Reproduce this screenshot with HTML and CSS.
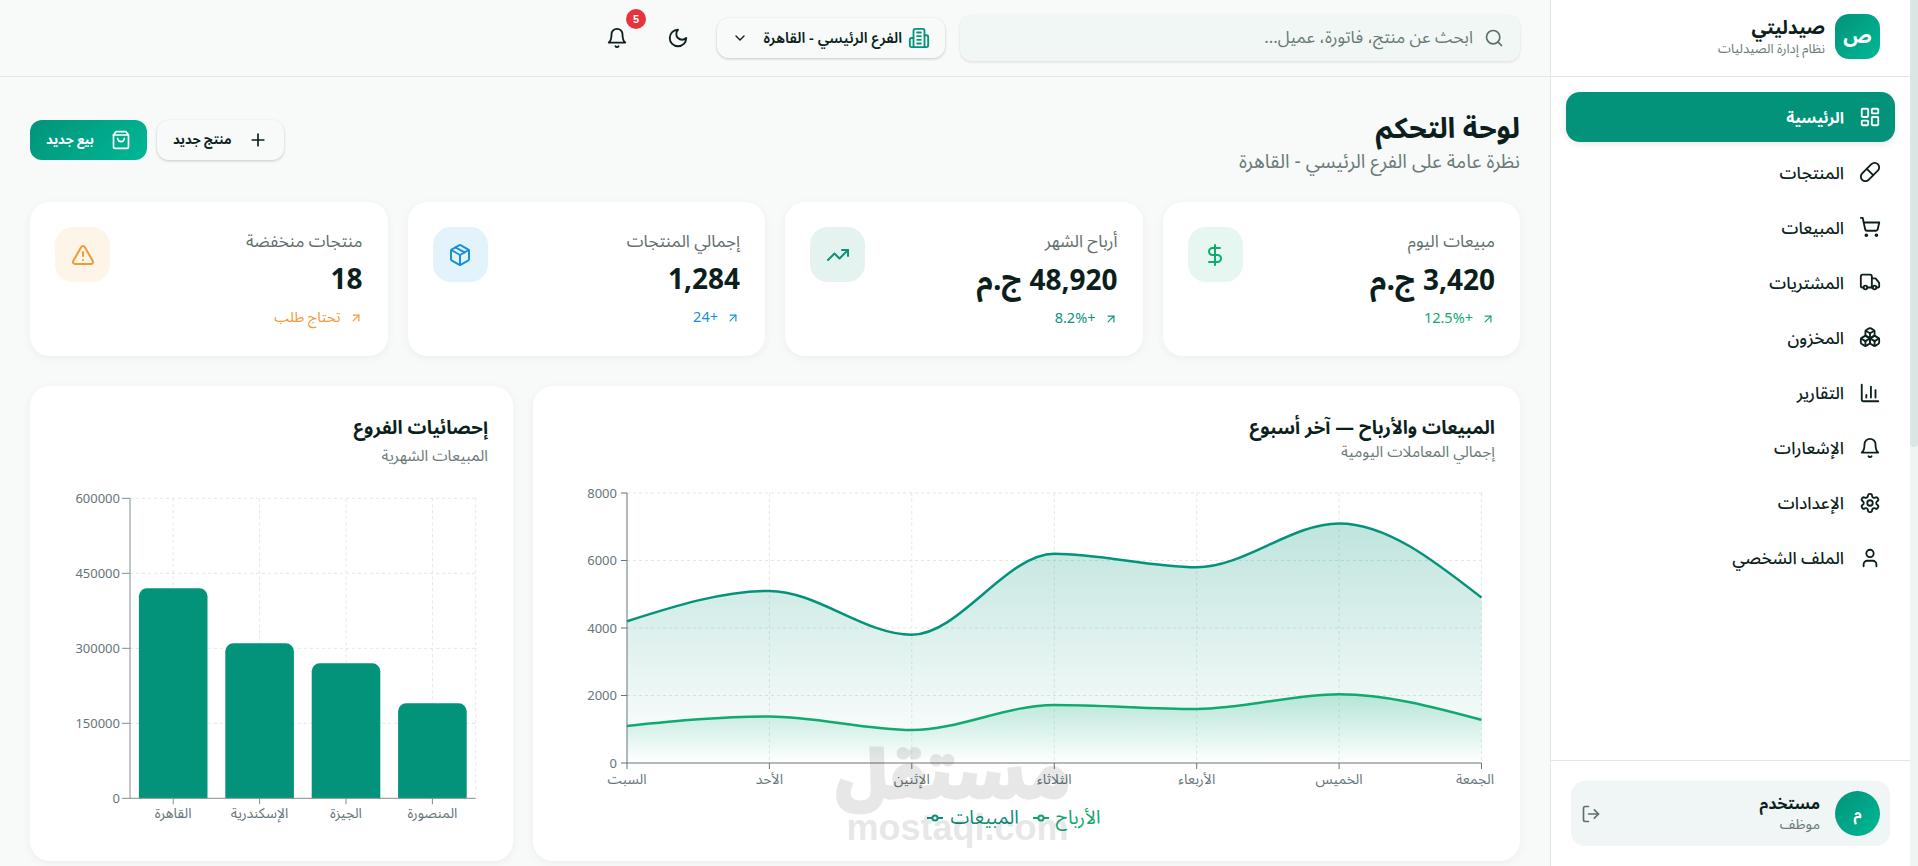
FILE: index.html
```html
<!DOCTYPE html>
<html lang="ar" dir="rtl">
<head>
  <meta charset="UTF-8" />
  <meta name="viewport" content="width=device-width, initial-scale=1.0"/>
  <title>صيدليتي - لوحة التحكم</title>
  <link rel="stylesheet" href="styles.css">
</head>
<body>
  <svg class="sprite" aria-hidden="true">
    <symbol id="i-dashboard" viewBox="0 0 24 24"><rect width="7" height="9" x="3" y="3" rx="1"/><rect width="7" height="5" x="14" y="3" rx="1"/><rect width="7" height="9" x="14" y="12" rx="1"/><rect width="7" height="5" x="3" y="16" rx="1"/></symbol>
    <symbol id="i-pill" viewBox="0 0 24 24"><path d="m10.5 20.5 10-10a4.95 4.95 0 1 0-7-7l-10 10a4.95 4.95 0 1 0 7 7Z"/><path d="m8.5 8.5 7 7"/></symbol>
    <symbol id="i-cart" viewBox="0 0 24 24"><circle cx="8" cy="21" r="1"/><circle cx="19" cy="21" r="1"/><path d="M2.05 2.05h2l2.66 12.42a2 2 0 0 0 2 1.58h9.78a2 2 0 0 0 1.95-1.57l1.65-7.43H5.12"/></symbol>
    <symbol id="i-truck" viewBox="0 0 24 24"><path d="M14 18V6a2 2 0 0 0-2-2H4a2 2 0 0 0-2 2v11a1 1 0 0 0 1 1h2"/><path d="M15 18H9"/><path d="M19 18h2a1 1 0 0 0 1-1v-3.65a1 1 0 0 0-.22-.624l-3.48-4.35A1 1 0 0 0 17.52 8H14"/><circle cx="17" cy="18" r="2"/><circle cx="7" cy="18" r="2"/></symbol>
    <symbol id="i-boxes" viewBox="0 0 24 24"><path d="M2.97 12.92A2 2 0 0 0 2 14.63v3.24a2 2 0 0 0 .97 1.71l3 1.8a2 2 0 0 0 2.06 0L12 19v-5.5l-5-3-4.03 2.42Z"/><path d="m7 16.5-4.74-2.85"/><path d="m7 16.5 5-3"/><path d="M7 16.5v5.17"/><path d="M12 13.5V19l3.97 2.38a2 2 0 0 0 2.06 0l3-1.8a2 2 0 0 0 .97-1.71v-3.24a2 2 0 0 0-.97-1.71L17 10.5l-5 3Z"/><path d="m17 16.5-5-3"/><path d="m17 16.5 4.74-2.85"/><path d="M17 16.5v5.17"/><path d="M7.97 4.42A2 2 0 0 0 7 6.13v4.37l5 3 5-3V6.13a2 2 0 0 0-.97-1.71l-3-1.8a2 2 0 0 0-2.06 0l-3 1.8Z"/><path d="M12 8 7.26 5.15"/><path d="m12 8 4.74-2.85"/><path d="M12 13.5V8"/></symbol>
    <symbol id="i-chart" viewBox="0 0 24 24"><path d="M3 3v16a2 2 0 0 0 2 2h16"/><path d="M18 17V9"/><path d="M13 17V5"/><path d="M8 17v-3"/></symbol>
    <symbol id="i-bell" viewBox="0 0 24 24"><path d="M6 8a6 6 0 0 1 12 0c0 7 3 9 3 9H3s3-2 3-9"/><path d="M10.3 21a1.94 1.94 0 0 0 3.4 0"/></symbol>
    <symbol id="i-settings" viewBox="0 0 24 24"><path d="M12.22 2h-.44a2 2 0 0 0-2 2v.18a2 2 0 0 1-1 1.73l-.43.25a2 2 0 0 1-2 0l-.15-.08a2 2 0 0 0-2.73.73l-.22.38a2 2 0 0 0 .73 2.73l.15.1a2 2 0 0 1 1 1.72v.51a2 2 0 0 1-1 1.74l-.15.09a2 2 0 0 0-.73 2.73l.22.38a2 2 0 0 0 2.73.73l.15-.08a2 2 0 0 1 2 0l.43.25a2 2 0 0 1 1 1.73V20a2 2 0 0 0 2 2h.44a2 2 0 0 0 2-2v-.18a2 2 0 0 1 1-1.73l.43-.25a2 2 0 0 1 2 0l.15.08a2 2 0 0 0 2.73-.73l.22-.39a2 2 0 0 0-.73-2.73l-.15-.08a2 2 0 0 1-1-1.74v-.5a2 2 0 0 1 1-1.74l.15-.09a2 2 0 0 0 .73-2.73l-.22-.38a2 2 0 0 0-2.73-.73l-.15.08a2 2 0 0 1-2 0l-.43-.25a2 2 0 0 1-1-1.73V4a2 2 0 0 0-2-2z"/><circle cx="12" cy="12" r="3"/></symbol>
    <symbol id="i-user" viewBox="0 0 24 24"><path d="M19 21v-2a4 4 0 0 0-4-4H9a4 4 0 0 0-4 4v2"/><circle cx="12" cy="7" r="4"/></symbol>
    <symbol id="i-logout" viewBox="0 0 24 24"><path d="M9 21H5a2 2 0 0 1-2-2V5a2 2 0 0 1 2-2h4"/><path d="m16 17 5-5-5-5"/><path d="M21 12H9"/></symbol>
    <symbol id="i-search" viewBox="0 0 24 24"><circle cx="11" cy="11" r="8"/><path d="m21 21-4.3-4.3"/></symbol>
    <symbol id="i-building" viewBox="0 0 24 24"><path d="M6 22V4a2 2 0 0 1 2-2h8a2 2 0 0 1 2 2v18Z"/><path d="M6 12H4a2 2 0 0 0-2 2v6a2 2 0 0 0 2 2h2"/><path d="M18 9h2a2 2 0 0 1 2 2v9a2 2 0 0 1-2 2h-2"/><path d="M10 6h4"/><path d="M10 10h4"/><path d="M10 14h4"/><path d="M10 18h4"/></symbol>
    <symbol id="i-chevron" viewBox="0 0 24 24"><path d="m6 9 6 6 6-6"/></symbol>
    <symbol id="i-moon" viewBox="0 0 24 24"><path d="M12 3a6 6 0 0 0 9 9 9 9 0 1 1-9-9Z"/></symbol>
    <symbol id="i-bag" viewBox="0 0 24 24"><path d="M6 2 3 6v14a2 2 0 0 0 2 2h14a2 2 0 0 0 2-2V6l-3-4Z"/><path d="M3 6h18"/><path d="M16 10a4 4 0 0 1-8 0"/></symbol>
    <symbol id="i-plus" viewBox="0 0 24 24"><path d="M5 12h14"/><path d="M12 5v14"/></symbol>
    <symbol id="i-dollar" viewBox="0 0 24 24"><path d="M12 2v20"/><path d="M17 5H9.5a3.5 3.5 0 0 0 0 7h5a3.5 3.5 0 0 1 0 7H6"/></symbol>
    <symbol id="i-trend" viewBox="0 0 24 24"><path d="M22 7 13.5 15.5 8.5 10.5 2 17"/><path d="M16 7h6v6"/></symbol>
    <symbol id="i-package" viewBox="0 0 24 24"><path d="M11 21.73a2 2 0 0 0 2 0l7-4A2 2 0 0 0 21 16V8a2 2 0 0 0-1-1.73l-7-4a2 2 0 0 0-2 0l-7 4A2 2 0 0 0 3 8v8a2 2 0 0 0 1 1.73z"/><path d="M12 22V12"/><path d="M3.29 7 12 12l8.71-5"/><path d="m7.5 4.27 9 5.15"/></symbol>
    <symbol id="i-alert" viewBox="0 0 24 24"><path d="m21.73 18-8-14a2 2 0 0 0-3.48 0l-8 14A2 2 0 0 0 4 21h16a2 2 0 0 0 1.73-3"/><path d="M12 9v4"/><path d="M12 17h.01"/></symbol>
    <symbol id="i-arrow" viewBox="0 0 24 24"><path d="M7 7h10v10"/><path d="M7 17 17 7"/></symbol>
  </svg>

  <div class="app">
    <div class="scrollbar"><div class="scrollbar-thumb"></div></div>

    <!-- القائمة الجانبية -->
    <aside class="sidebar">
      <div class="brand">
        <div class="avatar logo">ص</div>
        <div>
          <div class="brand-name">صيدليتي</div>
          <div class="brand-sub">نظام إدارة الصيدليات</div>
        </div>
      </div>
      <nav class="nav">
        <a class="nav-item active"><svg class="icon"><use href="#i-dashboard"/></svg><span>الرئيسية</span></a>
        <a class="nav-item"><svg class="icon"><use href="#i-pill"/></svg><span>المنتجات</span></a>
        <a class="nav-item"><svg class="icon"><use href="#i-cart"/></svg><span>المبيعات</span></a>
        <a class="nav-item"><svg class="icon"><use href="#i-truck"/></svg><span>المشتريات</span></a>
        <a class="nav-item"><svg class="icon"><use href="#i-boxes"/></svg><span>المخزون</span></a>
        <a class="nav-item"><svg class="icon"><use href="#i-chart"/></svg><span>التقارير</span></a>
        <a class="nav-item"><svg class="icon"><use href="#i-bell"/></svg><span>الإشعارات</span></a>
        <a class="nav-item"><svg class="icon"><use href="#i-settings"/></svg><span>الإعدادات</span></a>
        <a class="nav-item"><svg class="icon"><use href="#i-user"/></svg><span>الملف الشخصي</span></a>
      </nav>
      <div class="sidebar-footer">
        <div class="user-card">
          <div class="avatar round">م</div>
          <div class="user-info">
            <div class="user-name">مستخدم</div>
            <div class="user-role">موظف</div>
          </div>
          <svg class="icon logout"><use href="#i-logout"/></svg>
        </div>
      </div>
    </aside>

    <div class="main">
      <!-- الشريط العلوي -->
      <header class="topbar">
        <div class="search">
          <svg class="icon search-icon"><use href="#i-search"/></svg>
          <input type="text" placeholder="ابحث عن منتج، فاتورة، عميل..." />
        </div>
        <button class="branch">
          <svg class="icon branch-icon"><use href="#i-building"/></svg>
          <span>الفرع الرئيسي - القاهرة</span>
          <svg class="icon chevron"><use href="#i-chevron"/></svg>
        </button>
        <button class="icon-btn"><svg class="icon"><use href="#i-moon"/></svg></button>
        <button class="icon-btn">
          <svg class="icon"><use href="#i-bell"/></svg>
          <span class="badge">5</span>
        </button>
      </header>

      <main class="content">
        <div class="page-head">
          <div>
            <h1>لوحة التحكم</h1>
            <p>نظرة عامة على الفرع الرئيسي - القاهرة</p>
          </div>
          <div class="page-actions">
            <button class="btn btn-light"><svg class="icon"><use href="#i-plus"/></svg>منتج جديد</button>
            <button class="btn btn-primary"><svg class="icon"><use href="#i-bag"/></svg>بيع جديد</button>
          </div>
        </div>

        <!-- البطاقات -->
        <section class="stats">
          <div class="stat green">
            <div class="stat-body">
              <div class="stat-label">مبيعات اليوم</div>
              <div class="stat-value">3,420 <span class="currency">ج.م</span></div>
              <div class="stat-trend"><svg class="icon"><use href="#i-arrow"/></svg>+12.5%</div>
            </div>
            <div class="stat-icon"><svg class="icon"><use href="#i-dollar"/></svg></div>
          </div>
          <div class="stat teal">
            <div class="stat-body">
              <div class="stat-label">أرباح الشهر</div>
              <div class="stat-value">48,920 <span class="currency">ج.م</span></div>
              <div class="stat-trend"><svg class="icon"><use href="#i-arrow"/></svg>+8.2%</div>
            </div>
            <div class="stat-icon"><svg class="icon"><use href="#i-trend"/></svg></div>
          </div>
          <div class="stat blue">
            <div class="stat-body">
              <div class="stat-label">إجمالي المنتجات</div>
              <div class="stat-value">1,284</div>
              <div class="stat-trend"><svg class="icon"><use href="#i-arrow"/></svg>+24</div>
            </div>
            <div class="stat-icon"><svg class="icon"><use href="#i-package"/></svg></div>
          </div>
          <div class="stat orange">
            <div class="stat-body">
              <div class="stat-label">منتجات منخفضة</div>
              <div class="stat-value">18</div>
              <div class="stat-trend"><svg class="icon"><use href="#i-arrow"/></svg>تحتاج طلب</div>
            </div>
            <div class="stat-icon"><svg class="icon"><use href="#i-alert"/></svg></div>
          </div>
        </section>

        <!-- الرسوم البيانية -->
        <section class="charts">
          <div class="chart-card">
            <h2>المبيعات والأرباح — آخر أسبوع</h2>
            <p class="chart-sub">إجمالي المعاملات اليومية</p>
            <svg class="chart" width="937" height="320" viewBox="558 480 937 320">
              <defs>
                <linearGradient id="fillSales" x1="0" y1="0" x2="0" y2="1">
                  <stop offset="0" stop-color="#03937b" stop-opacity=".25"/>
                  <stop offset="1" stop-color="#03937b" stop-opacity="0"/>
                </linearGradient>
                <linearGradient id="fillProfit" x1="0" y1="0" x2="0" y2="1">
                  <stop offset="0" stop-color="#10b07e" stop-opacity=".25"/>
                  <stop offset="1" stop-color="#10b07e" stop-opacity="0"/>
                </linearGradient>
              </defs>
              <g class="grid">
                <path d="M627 493H1481.5M627 560.5H1481.5M627 628H1481.5M627 695.5H1481.5"/>
                <path d="M769.4 493V763M911.8 493V763M1054.3 493V763M1196.7 493V763M1339.1 493V763M1481.5 493V763"/>
              </g>
              <path fill="url(#fillSales)" d="M627,621.25C674.47,606.08 721.93,590.9 769.4,590.9C816.87,590.9 864.33,634.75 911.8,634.75C959.3,634.75 1006.8,553.75 1054.3,553.75C1101.8,553.75 1149.2,567.25 1196.7,567.25C1244.2,567.25 1291.6,523.4 1339.1,523.4C1386.6,523.4 1434,560.5 1481.5,597.6V763H627Z"/>
              <path fill="url(#fillProfit)" d="M627,725.9C674.47,721.15 721.93,716.4 769.4,716.4C816.87,716.4 864.33,729.9 911.8,729.9C959.3,729.9 1006.8,705 1054.3,705C1101.8,705 1149.2,709 1196.7,709C1244.2,709 1291.6,694.2 1339.1,694.2C1386.6,694.2 1434,707 1481.5,719.8V763H627Z"/>
              <path class="line sales" d="M627,621.25C674.47,606.08 721.93,590.9 769.4,590.9C816.87,590.9 864.33,634.75 911.8,634.75C959.3,634.75 1006.8,553.75 1054.3,553.75C1101.8,553.75 1149.2,567.25 1196.7,567.25C1244.2,567.25 1291.6,523.4 1339.1,523.4C1386.6,523.4 1434,560.5 1481.5,597.6"/>
              <path class="line profit" d="M627,725.9C674.47,721.15 721.93,716.4 769.4,716.4C816.87,716.4 864.33,729.9 911.8,729.9C959.3,729.9 1006.8,705 1054.3,705C1101.8,705 1149.2,709 1196.7,709C1244.2,709 1291.6,694.2 1339.1,694.2C1386.6,694.2 1434,707 1481.5,719.8"/>
              <path class="axis" d="M627 493V763H1481.5M621 493H627M621 560.5H627M621 628H627M621 695.5H627M621 763H627M627 763V769M769.4 763V769M911.8 763V769M1054.3 763V769M1196.7 763V769M1339.1 763V769M1481.5 763V769"/>
              <g class="tick-y">
                <text x="617" y="497.5">8000</text>
                <text x="617" y="565">6000</text>
                <text x="617" y="632.5">4000</text>
                <text x="617" y="700">2000</text>
                <text x="617" y="767.5">0</text>
              </g>
              <g class="tick-x">
                <text x="627" y="784">السبت</text>
                <text x="769.4" y="784">الأحد</text>
                <text x="911.8" y="784">الإثنين</text>
                <text x="1054.3" y="784">الثلاثاء</text>
                <text x="1196.7" y="784">الأربعاء</text>
                <text x="1339.1" y="784">الخميس</text>
                <text class="tick-last" x="1494" y="784">الجمعة</text>
              </g>
            </svg>
            <div class="legend">
              <span class="legend-item profit">الأرباح<svg width="16" height="10" viewBox="0 0 16 10"><path d="M0 5H16"/><circle cx="8" cy="5" r="2.6"/></svg></span>
              <span class="legend-item sales">المبيعات<svg width="16" height="10" viewBox="0 0 16 10"><path d="M0 5H16"/><circle cx="8" cy="5" r="2.6"/></svg></span>
            </div>
          </div>

          <div class="chart-card">
            <h2>إحصائيات الفروع</h2>
            <p class="chart-sub chart-sub-low">المبيعات الشهرية</p>
            <svg class="chart" width="433" height="340" viewBox="55 484 433 340">
              <g class="grid">
                <path d="M130 498.3H475.7M130 573.3H475.7M130 648.3H475.7M130 723.3H475.7"/>
                <path d="M173.2 498.3V798.3M259.6 498.3V798.3M346 498.3V798.3M432.4 498.3V798.3M475.7 498.3V798.3"/>
              </g>
              <path class="bar" d="M138.9 798.3V596.3a8 8 0 0 1 8-8H199.5a8 8 0 0 1 8 8V798.3Z"/>
              <path class="bar" d="M225.3 798.3V651.3a8 8 0 0 1 8-8H285.9a8 8 0 0 1 8 8V798.3Z"/>
              <path class="bar" d="M311.7 798.3V671.3a8 8 0 0 1 8-8H372.3a8 8 0 0 1 8 8V798.3Z"/>
              <path class="bar" d="M398.1 798.3V711.3a8 8 0 0 1 8-8H458.7a8 8 0 0 1 8 8V798.3Z"/>
              <path class="axis axis-bar" d="M130 498.3V798.3H475.7M122 498.3H130M122 573.3H130M122 648.3H130M122 723.3H130M122 798.3H130M173.2 798.3V804.3M259.6 798.3V804.3M346 798.3V804.3M432.4 798.3V804.3"/>
              <g class="tick-y">
                <text x="120" y="503">600000</text>
                <text x="120" y="578">450000</text>
                <text x="120" y="653">300000</text>
                <text x="120" y="728">150000</text>
                <text x="120" y="803">0</text>
              </g>
              <g class="tick-x">
                <text x="173.2" y="818">القاهرة</text>
                <text x="259.6" y="818">الإسكندرية</text>
                <text x="346" y="818">الجيزة</text>
                <text x="432.4" y="818">المنصورة</text>
              </g>
            </svg>
          </div>
        </section>
      </main>
    </div>
  </div>

  <!-- علامة الموقع فوق الصورة -->
  <div class="watermark">
    <div class="watermark-ar">مستقل</div>
    <div class="watermark-en">mostaqi.com</div>
  </div>
</body>
</html>
```

FILE: styles.css
```css
* {
  box-sizing: border-box;
}

html, body {
  margin: 0;
  padding: 0;
  height: 100vh;
  overflow: hidden;
  font-family: "Noto Sans Arabic", "Noto Sans", "DejaVu Sans", sans-serif;
  color: #0c1f1d;
  background: #f7faf9;
}

.sprite {
  display: none;
}

.icon {
  width: 22px;
  height: 22px;
  flex: none;
  fill: none;
  stroke: currentColor;
  stroke-width: 2;
  stroke-linecap: round;
  stroke-linejoin: round;
}

.app {
  display: flex;
  height: 100vh;
}

/* شريط التمرير */
.scrollbar {
  width: 8px;
  flex: none;
  background: #eef5f3;
}
.scrollbar-thumb {
  height: 447px;
  background: #dbe6e4;
  border-radius: 0 0 4px 4px;
}

/* القائمة الجانبية */
.sidebar {
  width: 360px;
  flex: none;
  display: flex;
  flex-direction: column;
  background: #fff;
  border-left: 1px solid #dde9e6;
}

.brand {
  height: 77px;
  flex: none;
  display: flex;
  align-items: center;
  gap: 10px;
  padding: 0 30px 3px;
  border-bottom: 1px solid #dde9e6;
}
.brand-name {
  font-size: 19px;
  font-weight: 700;
  line-height: 24px;
}
.brand-sub {
  font-size: 13px;
  line-height: 18px;
  color: #6b7a78;
}

.avatar {
  width: 45px;
  height: 45px;
  flex: none;
  display: flex;
  align-items: center;
  justify-content: center;
  color: #fff;
  font-weight: 700;
  background: linear-gradient(135deg, #03937b, #00b894);
}
.logo {
  font-size: 20px;
  border-radius: 14px;
}
.round {
  font-size: 15px;
  border-radius: 50%;
}

.nav {
  flex: 1;
  display: flex;
  flex-direction: column;
  gap: 5px;
  padding: 15px;
}
.nav-item {
  height: 50.1px;
  display: flex;
  align-items: center;
  gap: 15px;
  padding: 0 14px;
  font-size: 17px;
  font-weight: 500;
  border-radius: 14px;
}
.nav-item span {
  margin-top: 3px;
}
.nav-item.active {
  color: #fff;
  font-size: 15.6px;
  font-weight: 700;
  background: #03937b;
  box-shadow: 0 2px 6px rgba(0,0,0,0.1);
}

.sidebar-footer {
  flex: none;
  padding: 20px;
  border-top: 1px solid #dde9e6;
}
.user-card {
  display: flex;
  align-items: center;
  gap: 15px;
  padding: 10px;
  background: #eff6f5;
  border-radius: 14px;
}
.user-info {
  flex: 1;
}
.user-name {
  font-size: 16px;
  font-weight: 700;
  line-height: 22px;
}
.user-role {
  font-size: 14.5px;
  line-height: 20px;
  color: #6b7a78;
}
.logout {
  width: 20px;
  height: 20px;
  color: #5f6f6d;
}

/* المحتوى */
.main {
  flex: 1;
  min-width: 0;
  background: #f7faf9;
}

.topbar {
  height: 77px;
  display: flex;
  align-items: center;
  gap: 17px;
  padding: 0 30px;
  border-bottom: 1px solid #dde9e6;
}
.search {
  width: 560px;
  height: 46px;
  display: flex;
  align-items: center;
  gap: 9px;
  padding: 0 16px;
  margin-left: -2px;
  background: #f0f7f5;
  border-radius: 12px;
  box-shadow: 0 1px 3px rgba(0,0,0,0.12);
}
.search-icon {
  width: 20px;
  height: 20px;
  color: #5f6f6d;
}
.search input {
  flex: 1;
  border: none;
  outline: none;
  background: transparent;
  font: inherit;
  font-size: 17px;
  color: #0c1f1d;
}
.search input::placeholder {
  color: #6b7a78;
  opacity: 1;
}

.branch {
  width: 228px;
  height: 40px;
  display: flex;
  align-items: center;
  gap: 6px;
  padding: 0 15px;
  border: none;
  background: #f7faf9;
  font: inherit;
  font-size: 14.8px;
  font-weight: 600;
  color: #0c1f1d;
  border-radius: 12px;
  box-shadow: 0 1px 3px rgba(0,0,0,0.2);
}
.branch span {
  flex: 1;
  text-align: right;
}
.branch-icon {
  color: #03937b;
}
.chevron {
  width: 16px;
  height: 16px;
}

.icon-btn {
  position: relative;
  width: 44px;
  height: 44px;
  display: flex;
  align-items: center;
  justify-content: center;
  padding: 0;
  border: none;
  background: none;
  color: #0c1f1d;
}
.badge {
  position: absolute;
  top: -7px;
  left: 31px;
  width: 20px;
  height: 20px;
  display: flex;
  align-items: center;
  justify-content: center;
  font-size: 11px;
  font-weight: 700;
  color: #fff;
  background: #e7333a;
  border-radius: 50%;
}

.content {
  padding: 30px;
}

.page-head {
  display: flex;
  align-items: center;
  justify-content: space-between;
  margin-bottom: 29px;
}
.page-head h1 {
  margin: 0;
  font-size: 28.5px;
  font-weight: 700;
  line-height: 44px;
}
.page-head p {
  margin: 0;
  font-size: 19.3px;
  line-height: 22px;
  color: #6b7a78;
}
.page-actions {
  display: flex;
  gap: 10px;
}
.btn {
  height: 40px;
  display: flex;
  align-items: center;
  gap: 17px;
  padding: 0 16px;
  border: none;
  font: inherit;
  font-size: 13px;
  font-weight: 700;
  border-radius: 12px;
}
.btn .icon {
  width: 20px;
  height: 20px;
}
.btn-primary {
  color: #fff;
  background: linear-gradient(135deg, #03937b, #00b894);
}
.btn-light {
  color: #0c1f1d;
  background: #f7faf9;
  box-shadow: 0 1px 3px rgba(0,0,0,0.2);
}

/* البطاقات */
.stats {
  display: grid;
  grid-template-columns: repeat(4, 1fr);
  gap: 20px;
  margin-bottom: 30px;
}
.stat {
  height: 154px;
  display: flex;
  justify-content: space-between;
  padding: 25px;
  background: #fff;
  border-radius: 20px;
  box-shadow: 0 2px 10px rgba(0,0,0,0.05);
}
.stat-label {
  font-size: 17px;
  line-height: 30px;
  color: #5f6f6d;
}
.stat-value {
  margin-top: 3px;
  font-size: 28px;
  font-weight: 700;
  line-height: 42px;
}
.currency {
  font-size: 30px;
}
.stat-trend {
  display: flex;
  align-items: center;
  gap: 8px;
  margin-top: 5px;
  font-size: 14.5px;
  line-height: 22px;
}
.stat-trend .icon {
  width: 14px;
  height: 14px;
}
.stat-icon {
  width: 55px;
  height: 55px;
  display: flex;
  align-items: center;
  justify-content: center;
  border-radius: 18px;
}
.stat-icon .icon {
  width: 24px;
  height: 24px;
}
.stat.green .stat-trend, .stat.green .stat-icon { color: #10a970; }
.stat.green .stat-icon { background: #e6f6f0; }
.stat.teal .stat-trend, .stat.teal .stat-icon { color: #0b927a; }
.stat.teal .stat-icon { background: #e5f3f0; }
.stat.blue .stat-trend, .stat.blue .stat-icon { color: #1a90d8; }
.stat.blue .stat-icon { background: #e3f3fc; }
.stat.orange .stat-trend, .stat.orange .stat-icon { color: #ee9b35; }
.stat.orange .stat-icon { background: #fdf6e8; }

/* الرسوم البيانية */
.charts {
  display: grid;
  grid-template-columns: 987fr 483fr;
  gap: 20px;
}
.chart-card {
  height: 475px;
  padding: 25px;
  background: #fff;
  border-radius: 20px;
  box-shadow: 0 2px 10px rgba(0,0,0,0.05);
}
.chart-card h2 {
  margin: 0;
  font-size: 18.8px;
  font-weight: 700;
  line-height: 34px;
}
.chart-sub {
  margin: 0 0 21px;
  font-size: 15.5px;
  line-height: 14px;
  color: #6b7a78;
}
.chart-sub-low {
  margin: 4px 0 20px;
  line-height: 15px;
}
.chart {
  display: block;
  direction: ltr;
}
.grid path {
  fill: none;
  stroke: #dfe9e6;
  stroke-dasharray: 3 3;
}
.axis {
  fill: none;
  stroke: #66757a;
}
.axis-bar {
  stroke: #7f8f8d;
}
.line {
  fill: none;
  stroke-width: 2.5;
}
.line.sales { stroke: #03937b; }
.line.profit { stroke: #10a970; }
.bar {
  fill: #03937b;
}
.tick-y text, .tick-x text {
  fill: #66757a;
}
.tick-y text {
  font-size: 13px;
  text-anchor: end;
}
.tick-x text {
  font-size: 14px;
  text-anchor: middle;
}
.tick-x .tick-last {
  text-anchor: end;
}

.legend {
  height: 36px;
  display: flex;
  align-items: center;
  justify-content: center;
  gap: 14px;
  padding-right: 25px;
  font-size: 19px;
}
.legend-item {
  display: flex;
  align-items: center;
  gap: 7px;
}
.legend-item path {
  stroke: currentColor;
  stroke-width: 2;
}
.legend-item circle {
  fill: #fff;
  stroke: currentColor;
  stroke-width: 2;
}
.legend-item.sales { color: #0b8e78; }
.legend-item.profit { color: #10a56e; }

/* العلامة المائية */
.watermark {
  position: absolute;
  left: 845px;
  top: 744px;
  width: 225px;
  color: #000;
  opacity: 0.09;
  text-align: center;
  pointer-events: none;
}
.watermark-ar {
  font-size: 66px;
  font-weight: 900;
  line-height: 66px;
  white-space: nowrap;
  -webkit-text-stroke: 3px #000;
}
.watermark-en {
  font-family: "Liberation Sans", sans-serif;
  font-size: 36px;
  font-weight: 700;
  line-height: 36px;
}
```
